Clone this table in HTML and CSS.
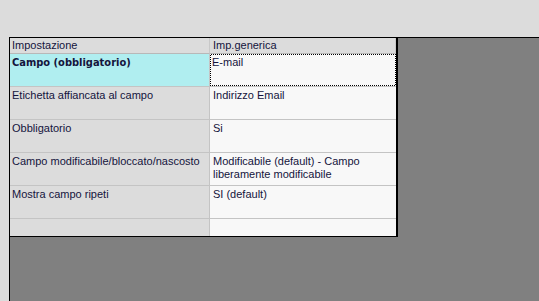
FILE: index.html
```html
<!DOCTYPE html>
<html lang="it">
<head>
<meta charset="utf-8">
<title>Impostazioni campo</title>
<link rel="stylesheet" href="styles.css">
</head>
<body>
<div class="workspace">
  <div class="grid">
    <div class="cell head">Impostazione</div>
    <div class="cell head val">Imp.generica</div>

    <div class="cell key selected"><b class="strong">Campo (obbligatorio)</b></div>
    <div class="cell val focus"><div class="focus-inner">E-mail</div></div>

    <div class="cell key">Etichetta affiancata al campo</div>
    <div class="cell val">Indirizzo Email</div>

    <div class="cell key">Obbligatorio</div>
    <div class="cell val">Si</div>

    <div class="cell key">Campo modificabile/bloccato/nascosto</div>
    <div class="cell val">Modificabile (default) - Campo liberamente modificabile</div>

    <div class="cell key">Mostra campo ripeti</div>
    <div class="cell val">SI (default)</div>

    <div class="cell key last"></div>
    <div class="cell val last"></div>
  </div>
</div>
</body>
</html>
```

FILE: styles.css
```css
html, body {
  margin: 0;
  padding: 0;
}

body {
  background: #dcdcdc;
  font-family: "Liberation Sans", Arial, sans-serif;
  font-size: 11px;
  color: #14143c;
  padding: 37px 0 0 9px;
  height: 301px;
  box-sizing: border-box;
  overflow: hidden;
}

/* dark client area framed on top and left */
.workspace {
  background: #808080;
  border-top: 1px solid #000;
  border-left: 1px solid #000;
  height: 264px;
  box-sizing: border-box;
}

.grid {
  display: grid;
  grid-template-columns: 200px 186px;
  grid-template-rows: 16px repeat(5, 33px) 17px;
  width: 386px;
  border-right: 2px solid #000;
  border-bottom: 1px solid #000;
}

.cell {
  box-sizing: border-box;
  border-bottom: 1px solid #c4c4c4;
  padding: 2px 2px 0 2px;
  line-height: 13px;
  overflow: hidden;
}

.strong {
  font-family: "DejaVu Sans Condensed", "DejaVu Sans", sans-serif;
  font-stretch: condensed;
  font-weight: bold;
}

.head {
  background: #dcdcdc;
  padding-top: 1px;
  border-bottom: 1px solid #b8b8b8;
  border-right: 1px solid #c8c8c8;
}

.key {
  background: #dcdcdc;
  border-right: 1px solid #c4c4c4;
}

.key.selected {
  background: #b0eef0;
}

.val {
  background: #f8f8f8;
  padding-left: 3px;
}

.head.val {
  background: #dcdcdc;
}

.last {
  border-bottom: 0;
}

/* checkered focus rectangle around the active cell */
.focus {
  padding: 0;
  border-bottom: 1px solid #c4c4c4;
  background: repeating-conic-gradient(#000 0 25%, #fff 0 50%) 0 0 / 2px 2px;
}

.focus-inner {
  background: #f8f8f8;
  margin: 1px;
  height: calc(100% - 2px);
  box-sizing: border-box;
  padding: 1px 0 0 1px;
}
```
